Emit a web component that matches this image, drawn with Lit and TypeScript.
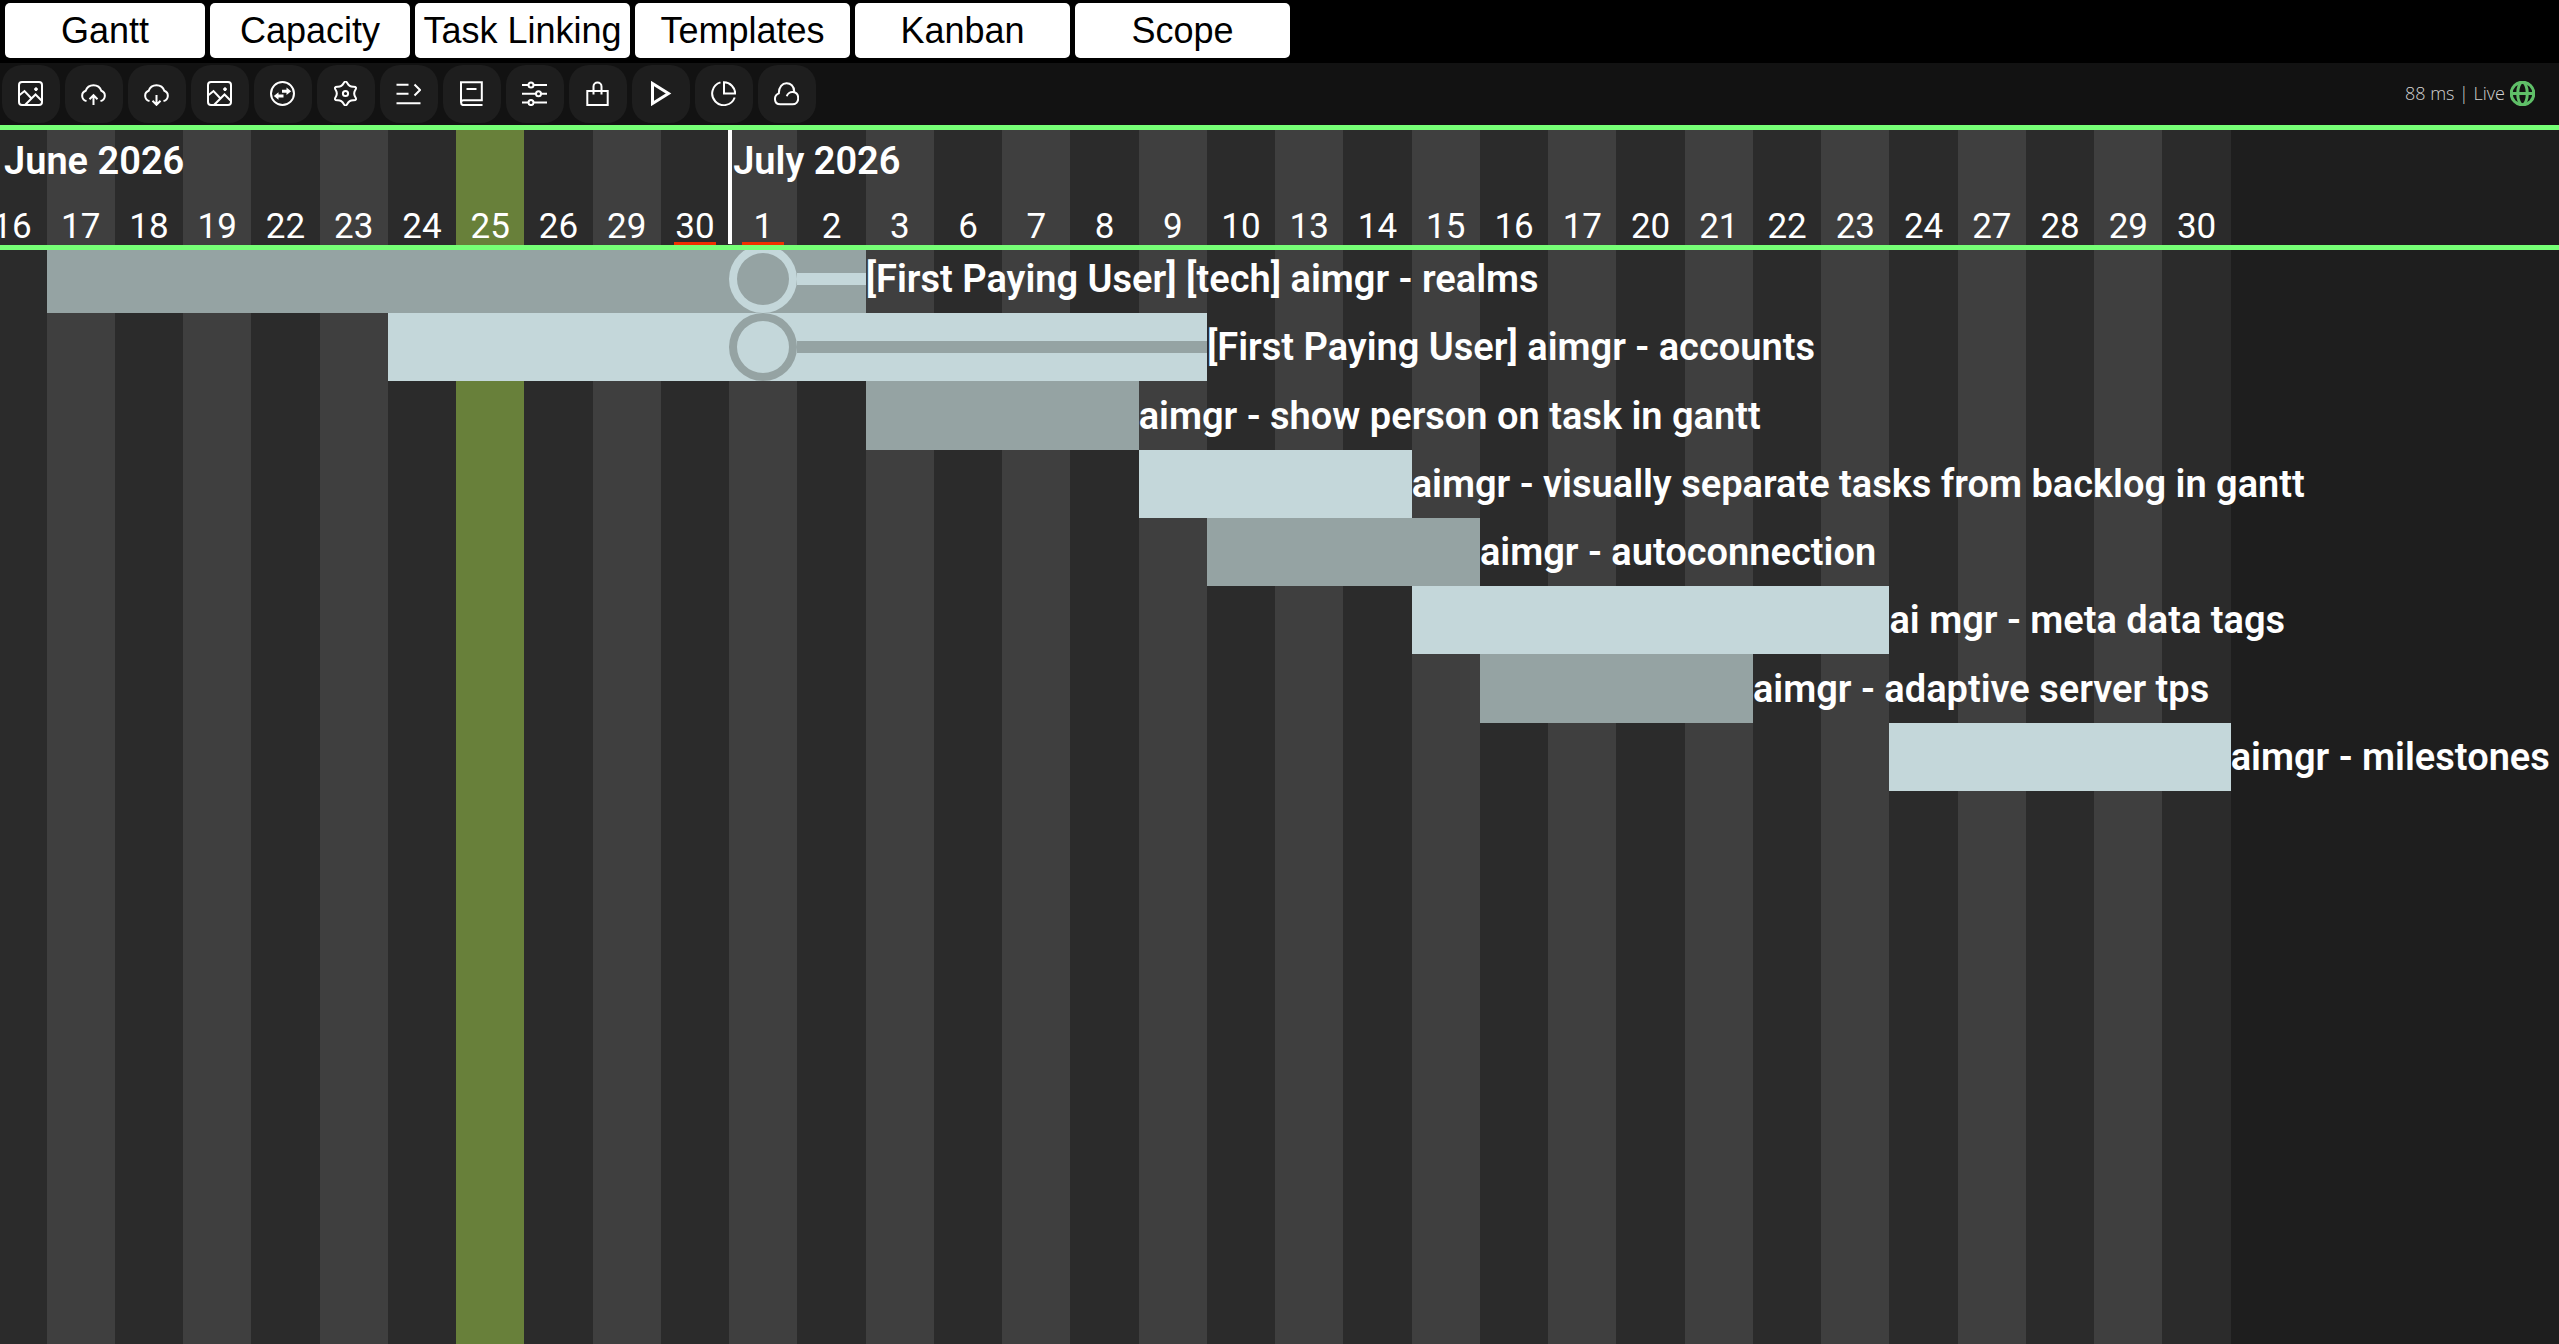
import { LitElement, html, svg, css } from "lit";
import { customElement } from "lit/decorators.js";
import { classMap } from "lit/directives/class-map.js";

interface Day {
  label: string;
  today?: boolean;
  flagged?: boolean;
}

interface Task {
  name: string;
  start: number;
  end: number;
  milestone?: number;
}

const TABS = ["Gantt", "Capacity", "Task Linking", "Templates", "Kanban", "Scope"];

const JUNE = [16, 17, 18, 19, 22, 23, 24, 25, 26, 29, 30];
const JULY = [1, 2, 3, 6, 7, 8, 9, 10, 13, 14, 15, 16, 17, 20, 21, 22, 23, 24, 27, 28, 29, 30];

const DAYS: Day[] = [
  ...JUNE.map((d) => ({ label: String(d), today: d === 25, flagged: d === 30 })),
  ...JULY.map((d) => ({ label: String(d), flagged: d === 1 })),
];

/* start and end are grid lines of the day columns */
const TASKS: Task[] = [
  { name: "[First Paying User] [tech] aimgr - realms", start: 2, end: 14, milestone: 12 },
  { name: "[First Paying User] aimgr - accounts", start: 7, end: 19, milestone: 12 },
  { name: "aimgr - show person on task in gantt", start: 14, end: 18 },
  { name: "aimgr - visually separate tasks from backlog in gantt", start: 18, end: 22 },
  { name: "aimgr - autoconnection", start: 19, end: 23 },
  { name: "ai mgr - meta data tags", start: 22, end: 29 },
  { name: "aimgr - adaptive server tps", start: 23, end: 27 },
  { name: "aimgr - milestones", start: 29, end: 34 },
];

/* Six rounded lobes, smoothed through the midpoints of a star */
function gearPath(): string {
  const pts = Array.from({ length: 12 }, (_, i) => {
    const r = i % 2 ? 7.6 : 13.8;
    const a = (Math.PI / 6) * i - Math.PI / 2;
    return [12.5 + r * Math.cos(a), 12.5 + r * Math.sin(a)];
  });
  const mid = (i: number) => {
    const a = pts[i % 12];
    const b = pts[(i + 1) % 12];
    return `${((a[0] + b[0]) / 2).toFixed(2)} ${((a[1] + b[1]) / 2).toFixed(2)}`;
  };
  let d = `M${mid(11)}`;
  pts.forEach((p, i) => (d += `Q${p[0].toFixed(2)} ${p[1].toFixed(2)} ${mid(i)}`));
  return d + "Z";
}

const picture = svg`
  <rect x="1" y="1" width="23" height="23" rx="3"/>
  <path d="M1 14.5L6.5 10L13 17M7 24L17.5 13.5L24 20"/>
  <circle class="solid" cx="18" cy="8.2" r="1.4"/>`;

const cloudOutline = "M5.5 20A5.3 5.3 0 0 1 4.7 9.8A8.2 8.2 0 0 1 20.3 9.8A5.3 5.3 0 0 1 19.5 20";

const TOOLS = [
  { name: "Background image", icon: picture },
  { name: "Upload", icon: svg`<path d="${cloudOutline}M12.5 24V14.5M8.5 18.2l4-4 4 4"/>` },
  { name: "Download", icon: svg`<path d="${cloudOutline}M12.5 14V23.5M8.5 19.8l4 4 4-4"/>` },
  { name: "Export image", icon: picture },
  {
    name: "Swap",
    icon: svg`<circle cx="12.5" cy="12.5" r="11.5"/>
      <path class="thick" d="M12 10.3H17M13.5 15H8"/>
      <path class="fill" d="M16.5 6.6L21.2 10.3L16.5 14ZM8.5 11.3L3.8 15L8.5 18.7Z"/>`,
  },
  { name: "Settings", icon: svg`<path d=${gearPath()}/><circle cx="12.5" cy="12.5" r="2.6"/>` },
  {
    name: "Indent",
    icon: svg`<path d="M.5 3.7H12.5M.5 12.8H12.5M.5 22.3H24.5M18.5 3.5L24 9L18.5 14.5"/>`,
  },
  {
    name: "Notebook",
    icon: svg`<path d="M2 21.5V1.2H22.8V19.3H4.5A2.4 2.4 0 0 0 4.5 24.1H23.5M7.5 8H17.5"/>`,
  },
  {
    name: "Filters",
    icon: svg`<path d="M0 4H6.5M11.5 4H25M0 12.8H14M19 12.8H25M0 21.6H6.5M11.5 21.6H25"/>
      <circle cx="9" cy="4" r="2.5"/><circle cx="16.5" cy="12.8" r="2.5"/><circle cx="9" cy="21.6" r="2.5"/>`,
  },
  {
    name: "Store",
    icon: svg`<path d="M2.3 10H22.7V24H2.3ZM8.5 13.5V5.5a4 4 0 0 1 8 0V13.5"/>`,
  },
  { name: "Play", icon: svg`<path class="thick" d="M4.5 2.5V22.5L20.5 12.5Z"/>` },
  {
    name: "Statistics",
    icon: svg`<path d="M9.5 1.4A11.6 11.6 0 1 0 23.7 16.5M13 1.3V12.6H24.2A11.4 11.4 0 0 0 13 1.3Z"/>`,
  },
  {
    name: "Cloud",
    icon: svg`<path d="M12.8 15.3C14 9.5 24.2 9 24.2 17.3C24.2 21 21.5 23.3 18.5 23.3H6.2C-.4 23.3-.6 14.5 4.8 12.4C4.6-1.2 20.3-.6 20.2 10.8"/>`,
  },
];

@customElement("app-root")
export class AppRoot extends LitElement {
  static styles = css`
    :host {
      --day: calc(100vw / 37.5);
      --line: #76ff76;
      --slate: #95a3a3;
      --mist: #c4d7da;
      display: flex;
      flex-direction: column;
      min-height: 100vh;
      background: #1e1e1e;
      color: #fff;
      font-family: Roboto, sans-serif;
      overflow: hidden;
    }
    .tabs {
      display: flex;
      gap: 5px;
      padding: 3px 5px 5px;
      background: #000;
    }
    .tab {
      box-sizing: border-box;
      min-width: 200px;
      height: 55px;
      padding: 1px 4px 0;
      border: 0;
      border-radius: 5px;
      background: #fff;
      color: #000;
      font: 36px/40px "Liberation Sans", Arial, sans-serif;
      white-space: nowrap;
    }
    .tab.wide {
      min-width: 215px;
    }
    .toolbar {
      display: flex;
      align-items: center;
      gap: 5px;
      padding: 2px;
      background: #121212;
      border-bottom: 5px solid var(--line);
    }
    .tool {
      box-sizing: border-box;
      display: grid;
      place-items: start;
      width: 58px;
      height: 58px;
      padding: 16px;
      border: 0;
      border-radius: 20px;
      background: #1e1e1e;
      color: #fff;
    }
    .icon {
      display: block;
      width: 25px;
      height: 25px;
      fill: none;
      stroke: currentColor;
      stroke-width: 2;
    }
    .icon .thick {
      stroke-width: 3;
    }
    .icon .solid {
      fill: currentColor;
      stroke-width: 1;
    }
    .icon .fill {
      fill: currentColor;
      stroke: none;
    }
    .status {
      display: flex;
      align-items: center;
      gap: 5px;
      margin-left: auto;
      padding: 0 22px 2px 0;
      color: #d0d0d0;
      font: 300 18px/24px "Open Sans", sans-serif;
    }
    .status .icon {
      color: #5fbf68;
    }
    .globe {
      stroke-width: 3;
    }
    .chart {
      flex: 1;
      display: grid;
      grid-template-rows: minmax(0, 1fr);
    }
    .stripes,
    .content {
      grid-area: 1 / 1;
      min-width: 0;
    }
    .days {
      display: grid;
      grid-template-columns: minmax(0, 0.683fr) repeat(32, minmax(0, 1fr)) minmax(0, 4.81fr);
    }
    .stripe {
      background: #2b2b2b;
    }
    .stripe.odd {
      background: #3f3f3f;
    }
    .stripe.today {
      background: #68803a;
    }
    .header {
      position: relative;
      z-index: 1;
      grid-template-rows: 56px 59px;
      border-bottom: 5px solid var(--line);
    }
    .month {
      grid-row: 1 / 3;
      margin: 0;
      padding: 11px 4px 0;
      font-size: 38px;
      line-height: 40px;
      font-weight: 600;
      white-space: nowrap;
    }
    .month.june {
      grid-column: 1 / 12;
    }
    .month.july {
      grid-column: 12 / 34;
      margin: 0 0 1px -1px;
      padding-left: 1px;
      border-left: 4px solid #fff;
    }
    .day {
      grid-row: 2;
      display: flex;
      flex-direction: column;
      align-items: center;
      justify-content: space-between;
      padding-top: 24px;
      font-size: 35px;
      line-height: 34px;
    }
    .day.cut {
      align-items: flex-end;
      padding-right: 15px;
    }
    .number {
      height: 32px;
    }
    .flag {
      width: 42px;
      height: 3px;
      background: #f03000;
    }
    .tasks {
      margin: -5px 0 0;
      padding: 0;
      list-style: none;
    }
    .task {
      --bar: var(--slate);
      --mark: var(--mist);
      height: var(--day);
      grid-template-rows: var(--day);
      align-items: center;
    }
    .task:nth-child(even) {
      --bar: var(--mist);
      --mark: var(--slate);
    }
    .bar {
      grid-row: 1;
      height: 100%;
      background: var(--bar);
    }
    .link {
      grid-row: 1;
      height: 12px;
      background: var(--mark);
    }
    .marker {
      grid-row: 1;
      box-sizing: border-box;
      height: 100%;
      border: 8px solid var(--mark);
      border-radius: 50%;
    }
    .name {
      grid-row: 1;
      font-size: 38px;
      line-height: 44px;
      font-weight: 600;
      white-space: nowrap;
    }
  `;

  private renderTask(task: Task) {
    const m = task.milestone;
    return html`
      <li class="task days">
        <div class="bar" style="grid-column:${task.start} / ${task.end}"></div>
        ${m
          ? html`<div class="link" style="grid-column:${m + 1} / ${task.end}"></div>
              <div class="marker" style="grid-column:${m}"></div>`
          : null}
        <span class="name" style="grid-column:${task.end} / -1">${task.name}</span>
      </li>
    `;
  }

  render() {
    return html`
      <nav class="tabs">
        ${TABS.map(
          (tab, i) => html`<button class=${classMap({ tab: true, wide: i > 1 })}>${tab}</button>`,
        )}
      </nav>
      <div class="toolbar">
        ${TOOLS.map(
          (tool) => html`<button class="tool" aria-label=${tool.name}>
            <svg class="icon" viewBox="0 0 25 25" aria-hidden="true">${tool.icon}</svg>
          </button>`,
        )}
        <div class="status">
          <span>88 ms | Live</span>
          <svg class="icon globe" viewBox="0 0 25 25" aria-hidden="true">
            <circle cx="12.5" cy="12.5" r="11.3" />
            <ellipse cx="12.5" cy="12.5" rx="4.8" ry="11.3" />
            <path d="M1 12.5H24" />
          </svg>
        </div>
      </div>
      <main class="chart">
        <div class="stripes days">
          ${DAYS.map(
            (day, i) => html`<div
              class=${classMap({ stripe: true, odd: i % 2 === 1, today: !!day.today })}
            ></div>`,
          )}
        </div>
        <div class="content">
          <div class="header days">
            <h2 class="month june">June 2026</h2>
            <h2 class="month july">July 2026</h2>
            ${DAYS.map(
              (day, i) => html`<div
                class=${classMap({ day: true, cut: i === 0 })}
                style="grid-column:${i + 1}"
              >
                <span class="number">${day.label}</span>
                ${day.flagged ? html`<span class="flag"></span>` : null}
              </div>`,
            )}
          </div>
          <ul class="tasks">
            ${TASKS.map((task) => this.renderTask(task))}
          </ul>
        </div>
      </main>
    `;
  }
}
